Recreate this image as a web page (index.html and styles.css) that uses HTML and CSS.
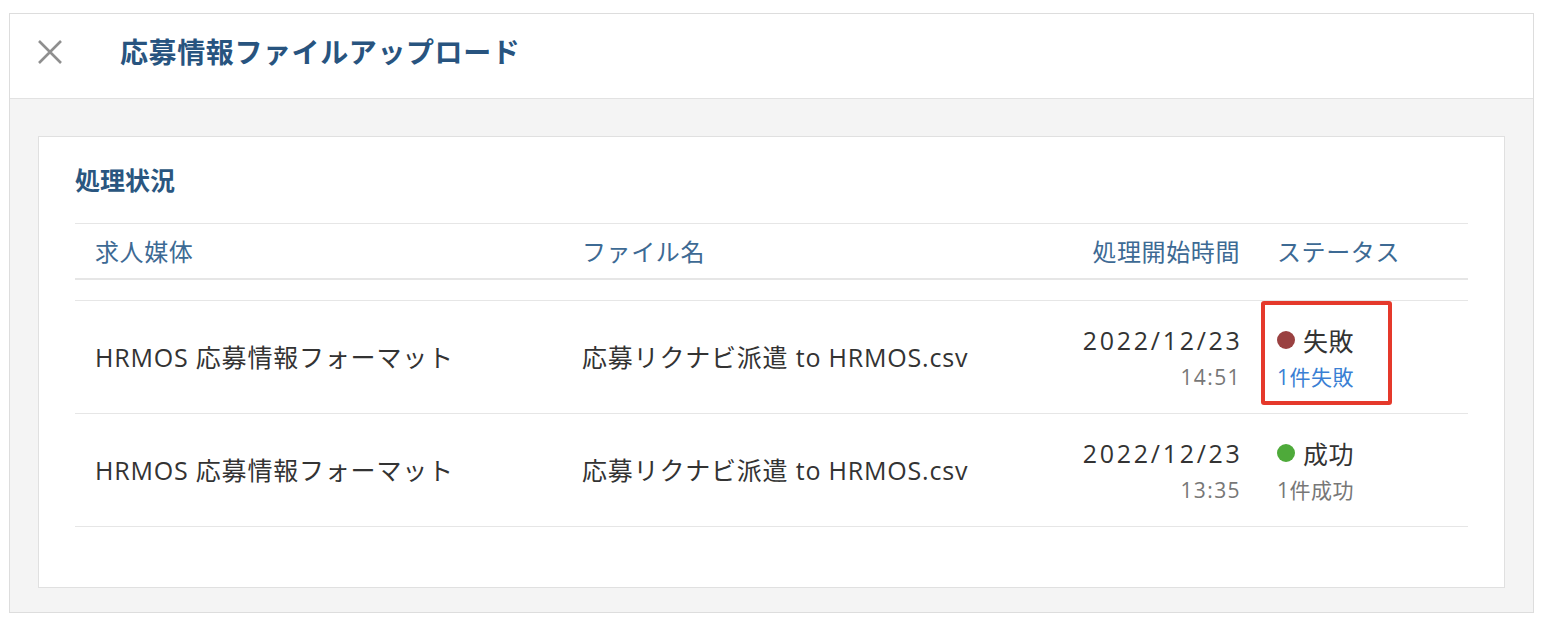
FILE: index.html
```html
<!DOCTYPE html>
<html lang="ja">
<head>
<meta charset="utf-8">
<title>応募情報ファイルアップロード</title>
<link rel="stylesheet" href="styles.css">
</head>
<body>
<div class="modal">
  <header class="modal-header">
    <button class="close" aria-label="閉じる">
      <svg width="26" height="26" viewBox="0 0 26 26"><path d="M2 2 L24 24 M24 2 L2 24" stroke="#8f8f8f" stroke-width="2.6" fill="none"/></svg>
    </button>
    <h1 class="title">応募情報ファイルアップロード</h1>
  </header>
  <div class="modal-body">
    <section class="card">
      <h2 class="card-title">処理状況</h2>
      <div class="table">
        <div class="thead">
          <div class="th c1">求人媒体</div>
          <div class="th c2">ファイル名</div>
          <div class="th c3">処理開始時間</div>
          <div class="th c4">ステータス</div>
        </div>
        <div class="tbody">
          <div class="tr">
            <div class="td c1">HRMOS 応募情報フォーマット</div>
            <div class="td c2">応募リクナビ派遣 to HRMOS.csv</div>
            <div class="td c3 stack">
              <span class="date">2022/12/23</span>
              <span class="time">14:51</span>
            </div>
            <div class="td c4 stack highlighted">
              <span class="status"><span class="dot dot-fail"></span>失敗</span>
              <a class="sub sub-link" href="#">1件失敗</a>
              <span class="annotation"></span>
            </div>
          </div>
          <div class="tr">
            <div class="td c1">HRMOS 応募情報フォーマット</div>
            <div class="td c2">応募リクナビ派遣 to HRMOS.csv</div>
            <div class="td c3 stack">
              <span class="date">2022/12/23</span>
              <span class="time">13:35</span>
            </div>
            <div class="td c4 stack">
              <span class="status"><span class="dot dot-ok"></span>成功</span>
              <span class="sub sub-muted">1件成功</span>
            </div>
          </div>
        </div>
      </div>
    </section>
  </div>
</div>
</body>
</html>
```

FILE: styles.css
```css
* { box-sizing: border-box; }
html, body { margin: 0; padding: 0; background: #ffffff; }
body {
  padding: 13px 14px 0 9px;
  font-family: "Open Sans", "Noto Sans CJK JP", sans-serif;
  color: #333333;
}
.modal {
  border: 1px solid #dddddd;
  background: #f4f4f4;
  height: 600px;
}
.modal-header {
  height: 85px;
  background: #ffffff;
  border-bottom: 1px solid #e2e2e2;
  display: flex;
  align-items: center;
  padding-left: 27px;
  padding-bottom: 10px;
}
.close {
  border: 0;
  background: none;
  padding: 0;
  width: 26px;
  height: 26px;
  display: flex;
  margin-top: 2px;
}
.title {
  margin: 0 0 0 57px;
  font-family: "Noto Sans CJK JP", sans-serif;
  font-size: 28px;
  font-weight: 700;
  color: #28547f;
  line-height: 40px;
  letter-spacing: 0.6px;
}
.modal-body {
  padding: 37px 28px 23px 28px;
}
.card {
  background: #ffffff;
  border: 1px solid #e0e0e0;
  padding: 24px 36px 60px 36px;
}
.card-title {
  margin: 0 0 26px 0;
  font-family: "Noto Sans CJK JP", sans-serif;
  font-size: 25px;
  font-weight: 700;
  line-height: 36px;
  color: #2a5680;
}
.thead, .tr {
  display: grid;
  grid-template-columns: 487px 498px 200px 1fr;
}
.thead {
  border-top: 1px solid #e6e6e6;
  border-bottom: 2px solid #e6e6e6;
  height: 57px;
  align-items: center;
  margin-bottom: 20px;
}
.th {
  font-size: 24px;
  line-height: 34px;
  color: #3d6a94;
  letter-spacing: 0.6px;
  font-family: "Noto Sans CJK JP", sans-serif;
}
.tr {
  border-top: 1px solid #e6e6e6;
  height: 113px;
  align-items: stretch;
}
.tr:last-child {
  height: 114px;
  border-bottom: 1px solid #e6e6e6;
}
.c1 { padding-left: 20px; }
.c2 { padding-left: 20px; }
.c3 { padding-right: 20px; text-align: right; }
.c4 { padding-left: 17px; }
.td {
  font-size: 25px;
  line-height: 36px;
  letter-spacing: 0.8px;
  display: flex;
  align-items: center;
  color: #333333;
}
.stack {
  flex-direction: column;
  justify-content: center;
  align-items: flex-start;
}
.c3.stack { align-items: flex-end; }
.date {
  line-height: 40px;
  letter-spacing: 2.7px;
  margin-right: -2.5px;
}
.time {
  font-size: 21px;
  line-height: 34px;
  color: #777777;
  letter-spacing: 1.4px;
  margin-right: -1px;
}
.status {
  display: flex;
  align-items: center;
  line-height: 40px;
  letter-spacing: 0.4px;
  font-family: "Noto Sans CJK JP", sans-serif;
}
.dot {
  width: 18px;
  height: 18px;
  border-radius: 50%;
  margin-right: 8px;
  flex: none;
}
.dot-fail { background: #9a4141; }
.dot-ok { background: #4eaa3a; }
.sub {
  font-size: 21px;
  line-height: 34px;
  letter-spacing: 0.5px;
  text-decoration: none;
}
.sub-link { color: #3a7fd4; }
.sub-muted { color: #777777; }
.highlighted { position: relative; }
.annotation {
  position: absolute;
  left: 1px;
  top: 0;
  width: 131px;
  height: 104px;
  border: 4px solid #e5392b;
  border-radius: 3px;
  pointer-events: none;
}
```
